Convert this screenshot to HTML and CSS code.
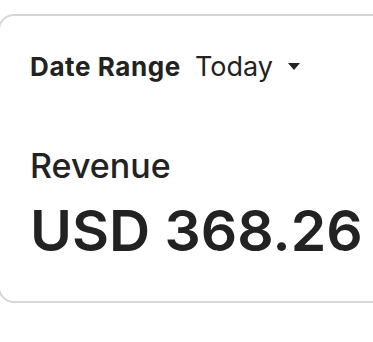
FILE: index.html
```html
<!DOCTYPE html>
<html lang="en">
<head>
    <meta charset="UTF-8">
    <meta name="viewport" content="width=device-width, initial-scale=1.0">
    <title>Revenue</title>
    <link rel="stylesheet" href="styles.css">
</head>
<body>
    <div class="stats-card">
        <div class="date-range">
            <span class="date-label">Date Range</span>
            <button class="date-select">Today <span class="caret"></span></button>
        </div>
        <div class="metric">
            <div class="metric-label">Revenue</div>
            <div class="metric-value">USD 368.26</div>
        </div>
    </div>
</body>
</html>
```

FILE: styles.css
```css
body {
    font-family: Inter, "Noto Sans", sans-serif;
    margin: 0;
    background-color: #fff;
    color: #222;
    overflow: hidden;
}
.stats-card {
    margin: 14px 0 0 -2px;
    width: 420px;
    height: 289px;
    box-sizing: border-box;
    border: 2px solid #d6d6d6;
    border-radius: 16px;
    padding: 34px 0 0 30px;
}
.date-range {
    display: flex;
    align-items: center;
    gap: 14px;
}
.date-label {
    font-size: 26px;
    font-weight: 700;
    letter-spacing: 0.6px;
}
.date-select {
    display: flex;
    align-items: center;
    gap: 15px;
    background: none;
    border: none;
    padding: 0;
    font-family: inherit;
    font-size: 27px;
    color: #222;
}
.caret {
    width: 0;
    height: 0;
    border-left: 6px solid transparent;
    border-right: 6px solid transparent;
    border-top: 7px solid #222;
}
.metric {
    margin-top: 62px;
}
.metric-label {
    font-size: 34px;
    font-weight: 500;
}
.metric-value {
    margin-top: 11px;
    font-size: 57px;
    font-weight: 600;
    line-height: 1.2;
}
```
